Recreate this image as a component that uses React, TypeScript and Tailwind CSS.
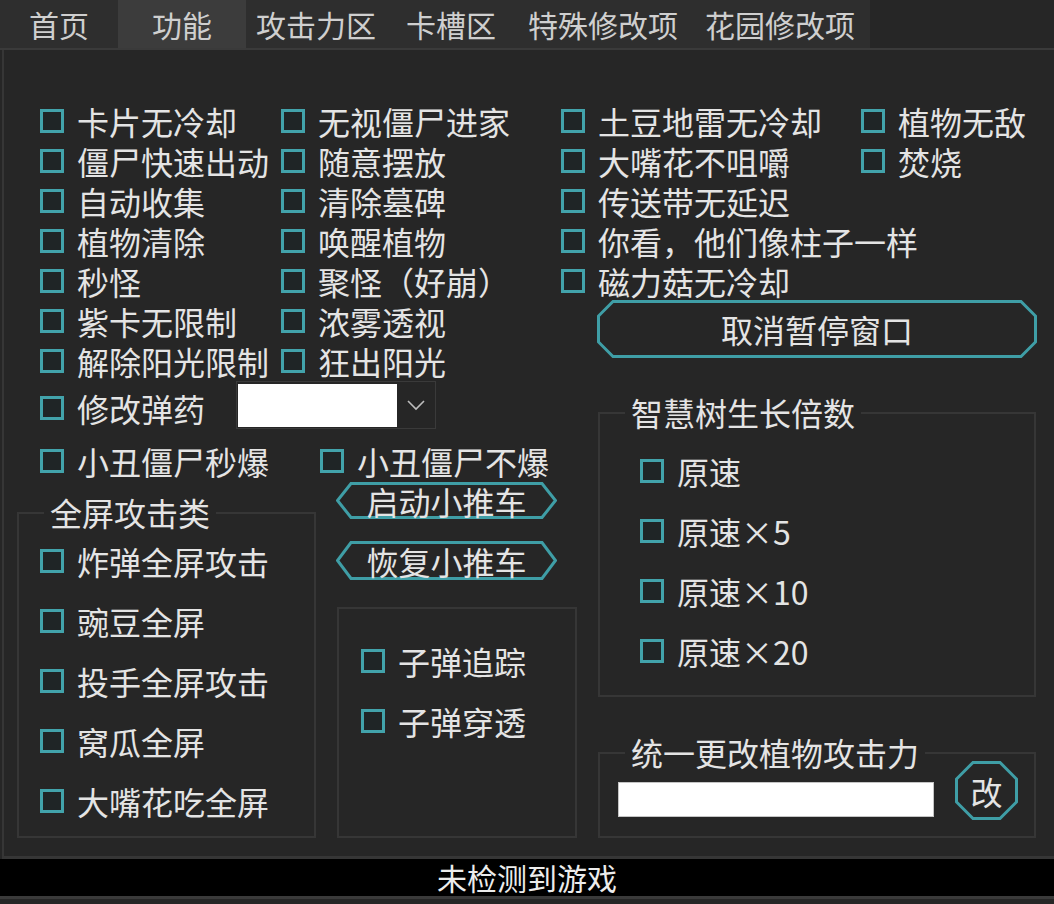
import React from 'react';

const TEAL = '#3f9ea6';

const tabs = [
  { name: '首页', w: 'w-[118px]' },
  { name: '功能', w: 'w-[128px]', active: true },
  { name: '攻击力区', w: 'w-[140px]' },
  { name: '卡槽区', w: 'w-[130px]' },
  { name: '特殊修改项', w: 'w-[174px]' },
  { name: '花园修改项', w: 'w-[180px]' },
];

const Check: React.FC<{ label: string; className?: string }> = ({ label, className }) => (
  <label className={`flex items-center h-[40px] gap-[13px] whitespace-nowrap ${className ?? ''}`}>
    <span className="block w-[24px] h-[24px] shrink-0 border-[3px] border-[#42a3ab] bg-[#1f2526]" />
    <span>{label}</span>
  </label>
);

// hexagon / octagon outlined buttons, drawn with an svg behind the label
const ShapeButton: React.FC<{ label: string; w: number; h: number; cut: number; pointed?: boolean; className?: string }> = ({
  label,
  w,
  h,
  cut,
  pointed,
  className,
}) => {
  const s = 1.5;
  const pts = pointed
    ? [
        [cut, s],
        [w - cut, s],
        [w - s, h / 2],
        [w - cut, h - s],
        [cut, h - s],
        [s, h / 2],
      ]
    : [
        [cut, s],
        [w - cut, s],
        [w - s, cut],
        [w - s, h - cut],
        [w - cut, h - s],
        [cut, h - s],
        [s, h - cut],
        [s, cut],
      ];
  return (
    <button className={`relative flex items-center justify-center shrink-0 ${className ?? ''}`} style={{ width: w, height: h }}>
      <svg className="absolute inset-0" width={w} height={h}>
        <polygon points={pts.map((p) => p.join(',')).join(' ')} fill="none" stroke={TEAL} strokeWidth={3} />
      </svg>
      <span className="relative leading-none">{label}</span>
    </button>
  );
};

const Group: React.FC<{ title?: string; className?: string; children: React.ReactNode }> = ({ title, className, children }) => (
  <div className={`relative shrink-0 border-2 border-[#363636] ${className ?? ''}`}>
    {title && (
      <span className="absolute -top-[20px] left-[25px] px-[6px] bg-[#262626] leading-[36px] whitespace-nowrap">{title}</span>
    )}
    {children}
  </div>
);

export default function App() {
  return (
    <div
      className="w-[1054px] h-[904px] overflow-hidden bg-[#262626] text-[#e4e4e4] text-[32px] flex flex-col"
      style={{ fontFamily: '"Noto Sans CJK SC", "Noto Sans", sans-serif' }}
    >
      {/* tabs */}
      <div className="h-[50px] shrink-0 flex border-b-2 border-[#3a3a3a]">
        <div className="flex bg-[#2e2e2e]">
          {tabs.map((t) => (
            <div
              key={t.name}
              className={`${t.w} h-full flex items-center justify-center text-[30px] text-[#cfcfcf] ${t.active ? 'bg-[#3c3c3c]' : ''}`}
            >
              {t.name}
            </div>
          ))}
        </div>
      </div>

      {/* main panel */}
      <div className="h-[809px] shrink-0 ml-[2px] border-l-2 border-b-[3px] border-[#363636] flex pt-[51px]">
        {/* left side */}
        <div className="w-[557px] shrink-0 flex flex-col">
          <div className="flex pl-[36px]">
            <div className="w-[241px] shrink-0 flex flex-col">
              {['卡片无冷却', '僵尸快速出动', '自动收集', '植物清除', '秒怪', '紫卡无限制', '解除阳光限制'].map((l) => (
                <Check key={l} label={l} />
              ))}
            </div>
            <div className="flex flex-col">
              {['无视僵尸进家', '随意摆放', '清除墓碑', '唤醒植物', '聚怪（好崩）', '浓雾透视', '狂出阳光'].map((l) => (
                <Check key={l} label={l} />
              ))}
            </div>
          </div>

          <div className="flex items-center h-[48px] pl-[36px]">
            <Check label="修改弹药" className="w-[196px] shrink-0 mt-[6px]" />
            <div className="w-[200px] h-[48px] shrink-0 border border-[#3a3a3a] flex items-center">
              <div className="ml-[1px] w-[159px] h-[43px] bg-white" />
              <div className="flex-1 flex justify-center">
                <svg width="18" height="12" viewBox="0 0 18 12">
                  <polyline points="1,2 9,10 17,2" fill="none" stroke="#bdbdbd" strokeWidth="1.6" />
                </svg>
              </div>
            </div>
          </div>

          <div className="flex mt-[12px] pl-[36px]">
            <Check label="小丑僵尸秒爆" className="w-[280px] shrink-0" />
            <Check label="小丑僵尸不爆" />
          </div>

          <div className="flex pl-[13px]">
            <Group title="全屏攻击类" className="w-[299px] h-[326px] mt-[31px]">
              <div className="flex flex-col gap-[20px] pt-[27px] pl-[21px]">
                {['炸弹全屏攻击', '豌豆全屏', '投手全屏攻击', '窝瓜全屏', '大嘴花吃全屏'].map((l) => (
                  <Check key={l} label={l} />
                ))}
              </div>
            </Group>
            <div className="ml-[20px] w-[241px] shrink-0 flex flex-col">
              <ShapeButton label="启动小推车" w={221} h={37} cut={15} pointed className="mt-[1px]" />
              <ShapeButton label="恢复小推车" w={221} h={39} cut={15} pointed className="mt-[22px]" />
              <Group className="mt-[27px] ml-[1px] w-[240px] h-[231px]">
                <div className="flex flex-col gap-[20px] pt-[32px] pl-[22px]">
                  <Check label="子弹追踪" />
                  <Check label="子弹穿透" />
                </div>
              </Group>
            </div>
          </div>
        </div>

        {/* right side */}
        <div className="flex-1 flex flex-col">
          <div className="flex">
            <div className="w-[300px] shrink-0 flex flex-col">
              {['土豆地雷无冷却', '大嘴花不咀嚼', '传送带无延迟', '你看，他们像柱子一样', '磁力菇无冷却'].map((l) => (
                <Check key={l} label={l} />
              ))}
            </div>
            <div className="flex flex-col">
              <Check label="植物无敌" />
              <Check label="焚烧" />
            </div>
          </div>

          <ShapeButton label="取消暂停窗口" w={440} h={58} cut={16} className="ml-[36px] -mt-[1px]" />

          <Group title="智慧树生长倍数" className="ml-[37px] w-[438px] h-[285px] mt-[54px]">
            <div className="flex flex-col gap-[20px] pt-[37px] pl-[40px]">
              {['原速', '原速×5', '原速×10', '原速×20'].map((l) => (
                <Check key={l} label={l} />
              ))}
            </div>
          </Group>

          <Group title="统一更改植物攻击力" className="ml-[37px] w-[438px] h-[86px] mt-[55px]">
            <div className="flex items-start pl-[18px]">
              <div className="mt-[28px] w-[316px] h-[35px] shrink-0 bg-white border border-[#c4c4c4]" />
              <ShapeButton label="改" w={63} h={59} cut={18} className="ml-[21px] mt-[7px]" />
            </div>
          </Group>
        </div>
      </div>

      {/* status bar */}
      <div className="h-[37px] shrink-0 bg-black flex items-center justify-center text-[30px] text-[#ececec]">未检测到游戏</div>
      <div className="flex-1 border-t-[3px] border-[#3a3a3a]" />
    </div>
  );
}
